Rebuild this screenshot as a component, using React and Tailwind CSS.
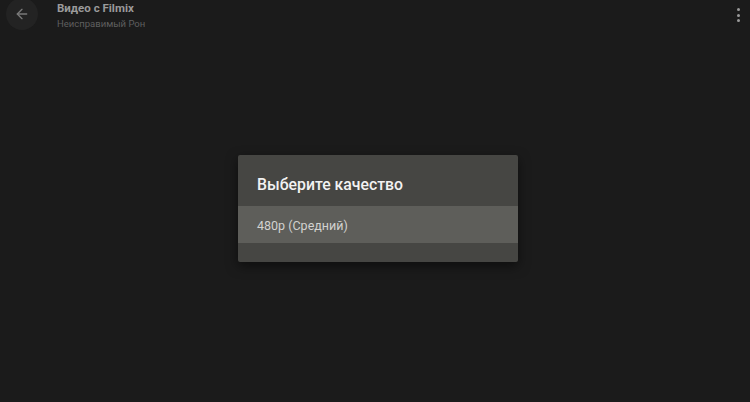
import { ArrowLeft } from 'lucide-react';

export default function App() {
  return (
    <div className="w-[750px] h-[402px] bg-[#1b1b1b] flex flex-col overflow-hidden" style={{ fontFamily: 'Roboto, "Noto Sans", sans-serif' }}>
      {/* Top bar */}
      <div className="h-[36px] flex items-start relative">
        <div className="w-[32px] h-[32px] rounded-full bg-[#232323] flex items-center justify-center ml-[6px] mt-[-2px]">
          <ArrowLeft className="w-[16px] h-[16px] text-[#7a7a7a]" strokeWidth={2} />
        </div>
        <div className="ml-[19px] flex flex-col leading-none">
          <span className="text-[11.5px] font-bold text-[#9a9a9a] mt-[3px]">Видео с Filmix</span>
          <span className="text-[9.5px] text-[#5f5f5f] mt-[4px]">Неисправимый Рон</span>
        </div>
        <div className="ml-auto mr-[10px] mt-[8px] flex flex-col gap-[2.5px]">
          <span className="w-[3px] h-[3px] rounded-full bg-[#9a9a9a]" />
          <span className="w-[3px] h-[3px] rounded-full bg-[#9a9a9a]" />
          <span className="w-[3px] h-[3px] rounded-full bg-[#9a9a9a]" />
        </div>
      </div>

      {/* Dialog */}
      <div className="flex-1 flex justify-center">
        <div className="mt-[119px] ml-[6px] w-[280px] h-[107px] bg-[#464643] rounded-[2px] shadow-[0_4px_12px_rgba(0,0,0,0.5)] flex flex-col">
          <div className="h-[51px] flex items-center pl-[19px] pt-[8px] text-[15.8px] font-medium text-[#f2f2f2]">
            Выберите качество
          </div>
          <div className="h-[37px] bg-[#5e5e5a] flex items-center pl-[19px] pt-[4px] text-[12.5px] text-[#d2d2d0]">
            480p (Средний)
          </div>
        </div>
      </div>
    </div>
  );
}
